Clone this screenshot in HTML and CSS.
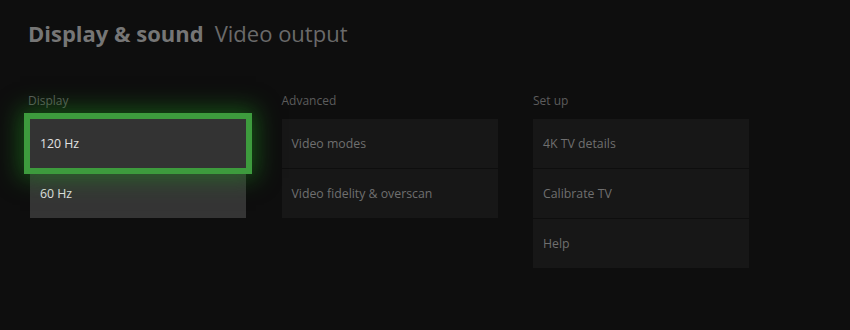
FILE: index.html
```html
<!DOCTYPE html>
<html>
<head>
<meta charset="utf-8">
<link rel="stylesheet" href="styles.css">
</head>
<body>
<div class="page">
  <h1 class="title"><span class="title-main">Display &amp; sound</span><span class="title-sub">Video output</span></h1>
  <div class="columns">
    <section class="column">
      <div class="label label-first">Display</div>
      <div class="tiles">
        <div class="tile tile-light tile-focus">120 Hz</div>
        <div class="tile tile-light">60 Hz</div>
      </div>
    </section>
    <section class="column">
      <div class="label">Advanced</div>
      <div class="tiles">
        <div class="tile">Video modes</div>
        <div class="tile">Video fidelity &amp; overscan</div>
      </div>
    </section>
    <section class="column">
      <div class="label">Set up</div>
      <div class="tiles">
        <div class="tile">4K TV details</div>
        <div class="tile">Calibrate TV</div>
        <div class="tile">Help</div>
      </div>
    </section>
  </div>
</div>
</body>
</html>
```

FILE: styles.css
```css
html, body {
  margin: 0;
  padding: 0;
  background: #0e0e0e;
}
body {
  width: 850px;
  height: 330px;
  overflow: hidden;
  font-family: "Open Sans", "Noto Sans", sans-serif;
}
.page {
  padding: 18px 0 0 28px;
}
.title {
  margin: 0;
  font-size: 22px;
  line-height: 30px;
  font-weight: normal;
  display: flex;
  gap: 11px;
}
.title-main {
  font-weight: 700;
  color: #767676;
}
.title-sub {
  color: #6a6a6a;
}
.columns {
  display: grid;
  grid-template-columns: repeat(3, 216px);
  column-gap: 35.5px;
  margin-top: 45px;
  margin-left: 2px;
}
.label {
  font-size: 12px;
  line-height: 16px;
  color: #5c5c5c;
  margin-bottom: 10px;
}
.label-first {
  margin-left: -2px;
}
.tiles {
  display: flex;
  flex-direction: column;
  gap: 1px;
}
.tile {
  height: 49px;
  display: flex;
  align-items: center;
  padding-left: 10px;
  background: #171717;
  color: #6f6f6f;
  font-size: 12.3px;
}
.tile-light {
  background: #353535;
  color: #e2e2e2;
}
.tile-focus {
  position: relative;
  z-index: 1;
  background: #333333;
  box-shadow: 0 0 0 6px #3d9b3d, 0 0 22px 10px rgba(30, 150, 30, 0.5);
}
```
